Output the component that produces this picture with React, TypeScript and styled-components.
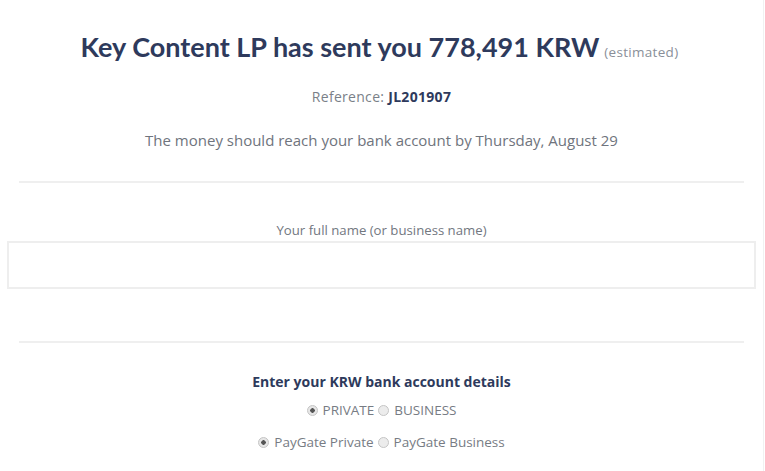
import React, { useState } from 'react'
import styled, { createGlobalStyle } from 'styled-components'

const GlobalStyle = createGlobalStyle`
    html, body {
        margin: 0;
        padding: 0;
        background: #ffffff;
    }
    body {
        font-family: "Open Sans", Lato, "Liberation Sans", sans-serif;
        color: #6b7280;
    }
`;

const Page = styled.div`
    width: 764px;
    height: 471px;
    border-right: 1px solid #f1f1f1;
    overflow: hidden;
    box-sizing: border-box;
`;

const Header = styled.div`
    display: flex;
    flex-direction: column;
    align-items: center;
    padding-top: 30px;
`;

const Title = styled.h1`
    margin: 0 0 0 -4px;
    font-family: Lato, "Open Sans", sans-serif;
    font-size: 27px;
    font-weight: 700;
    color: #2e3a5c;
    line-height: 34px;
    span {
        font-family: "Open Sans", sans-serif;
        font-size: 13.5px;
        font-weight: 400;
        letter-spacing: 0.3px;
        color: #8a8f99;
        margin-left: 5px;
    }
`;

const Reference = styled.p`
    margin: 18px 0 0;
    font-size: 14px;
    letter-spacing: 0.3px;
    color: #7a7f88;
    b {
        color: #2e3a5c;
        font-weight: 700;
    }
`;

const Eta = styled.p`
    margin: 24px 0 0;
    font-size: 15px;
    color: #6f747d;
`;

const Divider = styled.hr`
    border: none;
    border-top: 2px solid #efefef;
    margin: 0 19px;
`;

const Section = styled.div<{ $top: number }>`
    padding-top: ${props => props.$top}px;
`;

const FieldLabel = styled.label`
    display: block;
    text-align: center;
    font-size: 13.2px;
    color: #72777f;
    margin-bottom: 2px;
`;

const TextInput = styled.input`
    display: block;
    box-sizing: border-box;
    margin-left: 7px;
    width: 749px;
    height: 48px;
    border: 2px solid #eeeeee;
    background: #fff;
    outline: none;
    font-family: inherit;
    font-size: 14px;
    padding: 0 12px;
`;

const SubHeading = styled.h2`
    margin: 0;
    text-align: center;
    font-size: 14px;
    font-weight: 700;
    color: #2e3a5c;
`;

const RadioRow = styled.div<{ $top: number }>`
    display: flex;
    justify-content: center;
    align-items: center;
    gap: 4px;
    margin-top: ${props => props.$top}px;
`;

const RadioLabel = styled.label`
    display: flex;
    align-items: center;
    gap: 5px;
    font-size: 13.5px;
    color: #777c84;
`;

const RadioDot = styled.span<{ $checked: boolean }>`
    width: 9px;
    height: 9px;
    border-radius: 50%;
    border: 1px solid #c4c4c4;
    background: radial-gradient(circle, ${props => props.$checked ? '#555 0 2px, #e6e6e6 2.5px' : '#ececec 0'});
    box-sizing: content-box;
`;

const Radio: React.FC<{ checked: boolean; label: string; onClick: () => void }> = ({ checked, label, onClick }) => (
    <RadioLabel onClick={onClick}>
        <RadioDot $checked={checked} />
        {label}
    </RadioLabel>
);

export default function App() {
    const [kind, setKind] = useState("private");
    const [gate, setGate] = useState("private");

    return (
        <Page>
            <GlobalStyle />
            <Header>
                <Title>Key Content LP has sent you 778,491 KRW<span>(estimated)</span></Title>
                <Reference>Reference: <b>JL201907</b></Reference>
                <Eta>The money should reach your bank account by Thursday, August 29</Eta>
            </Header>
            <Section $top={31}>
                <Divider />
            </Section>
            <Section $top={38}>
                <FieldLabel>Your full name (or business name)</FieldLabel>
                <TextInput type="text" />
            </Section>
            <Section $top={52}>
                <Divider />
            </Section>
            <Section $top={29}>
                <SubHeading>Enter your KRW bank account details</SubHeading>
                <RadioRow $top={10}>
                    <Radio checked={kind === "private"} label="PRIVATE" onClick={() => setKind("private")} />
                    <Radio checked={kind === "business"} label="BUSINESS" onClick={() => setKind("business")} />
                </RadioRow>
                <RadioRow $top={14}>
                    <Radio checked={gate === "private"} label="PayGate Private" onClick={() => setGate("private")} />
                    <Radio checked={gate === "business"} label="PayGate Business" onClick={() => setGate("business")} />
                </RadioRow>
            </Section>
        </Page>
    )
}
